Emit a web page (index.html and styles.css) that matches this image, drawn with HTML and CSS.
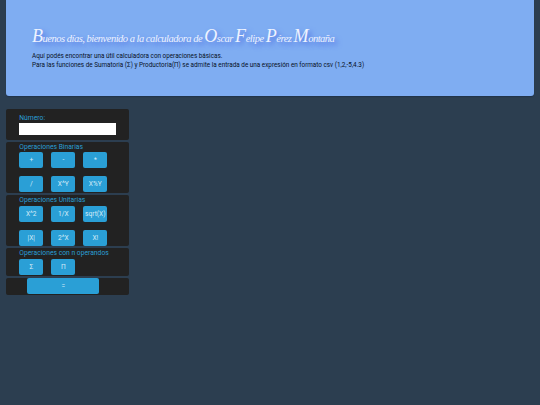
FILE: index.html
```html
<!DOCTYPE html>
<html lang="es">
<head>
<meta charset="utf-8">
<title>Calculadora</title>
<link rel="stylesheet" href="styles.css">
</head>
<body>
<header class="hero">
  <h1 class="hero-title"><span class="cap">B</span>uenos días, bienvenido a la calculadora de <span class="cap">O</span>scar <span class="cap">F</span>elipe <span class="cap">P</span>érez <span class="cap">M</span>ontaña</h1>
  <p class="hero-text">Aquí podés encontrar una útil calculadora con operaciones básicas.</p>
  <p class="hero-text">Para las funciones de Sumatoria (Σ) y Productoria(Π) se admite la entrada de una expresión en formato csv (1,2,-5,4.3)</p>
</header>
<main class="calc">
  <section class="group group-number">
    <label class="label" for="n">Número:</label>
    <input class="field" id="n" type="text">
  </section>
  <section class="group group-binary">
    <div class="label">Operaciones Binarias</div>
    <div class="keys">
      <button class="key">+</button><button class="key">-</button><button class="key">*</button>
      <button class="key">/</button><button class="key">X^Y</button><button class="key">X%Y</button>
    </div>
  </section>
  <section class="group group-unary">
    <div class="label">Operaciones Unitarias</div>
    <div class="keys">
      <button class="key">X^2</button><button class="key">1/X</button><button class="key">sqrt(X)</button>
      <button class="key">|X|</button><button class="key">2^X</button><button class="key">X!</button>
    </div>
  </section>
  <section class="group group-nary">
    <div class="label">Operaciones con n operandos</div>
    <div class="keys">
      <button class="key">Σ</button><button class="key">Π</button>
    </div>
  </section>
  <section class="group group-equals">
    <button class="key key-wide">=</button>
  </section>
</main>
</body>
</html>
```
FILE: styles.css
```css
* { box-sizing: border-box; }
html, body { margin: 0; padding: 0; }
body {
  height: 405px;
  overflow: hidden;
  background: #2c3e50;
  font-family: Roboto, "Liberation Sans", sans-serif;
}
.hero {
  width: 528px;
  height: 96px;
  margin: 0 0 13px 6px;
  padding: 27px 0 0 26px;
  background: #7fadf2;
  border-radius: 0 0 3px 3px;
  box-shadow: 0 1px 1px rgba(20, 40, 70, .5);
}
.hero-title {
  height: 20px;
  margin: 0 0 4.5px;
  font: italic 400 10.5px/20px "Liberation Serif", serif;
  letter-spacing: -.5px;
  color: #eef3ff;
  white-space: nowrap;
  text-shadow: 3px 3px 5px #4f6fe0;
}
.cap {
  font-size: 18px;
  font-weight: 400;
  line-height: 1;
  letter-spacing: -.4px;
}
.hero-text {
  margin: 0;
  font-size: 6.35px;
  line-height: 9px;
  color: #08111f;
  white-space: nowrap;
}
.calc {
  width: 123px;
  margin-left: 6px;
  display: flex;
  flex-direction: column;
  gap: 2px;
}
.group {
  background: #222;
  border-radius: 2px;
  padding: 0 13.3px;
}
.group-number { height: 30.5px; padding-top: 4.5px; }
.group-binary { height: 51.5px; }
.group-unary { height: 51px; }
.group-nary { height: 27.5px; }
.group-equals { height: 17px; padding-top: .7px; padding-left: 21.3px; }
.label {
  display: block;
  font-size: 6.75px;
  line-height: 9px;
  color: #2a9fd6;
  white-space: nowrap;
}
.group-binary .label, .group-unary .label, .group-nary .label { padding-top: 1px; }
.field {
  display: block;
  width: 96.4px;
  height: 12px;
  margin-top: .8px;
  padding: 0;
  background: #fff;
  border: 0;
}
.keys {
  display: grid;
  grid-template-columns: repeat(3, 24px);
  column-gap: 8px;
  row-gap: 7.7px;
  margin-top: 1px;
}
.group-binary .keys { row-gap: 8px; margin-top: .5px; }
.key {
  height: 16px;
  padding: 0;
  background: #2a9fd6;
  border: 0;
  border-radius: 2px;
  color: #d6ecf8;
  font: 400 6.6px/16px Roboto, "Liberation Sans", sans-serif;
}
.key-wide { display: block; width: 72px; }
```
